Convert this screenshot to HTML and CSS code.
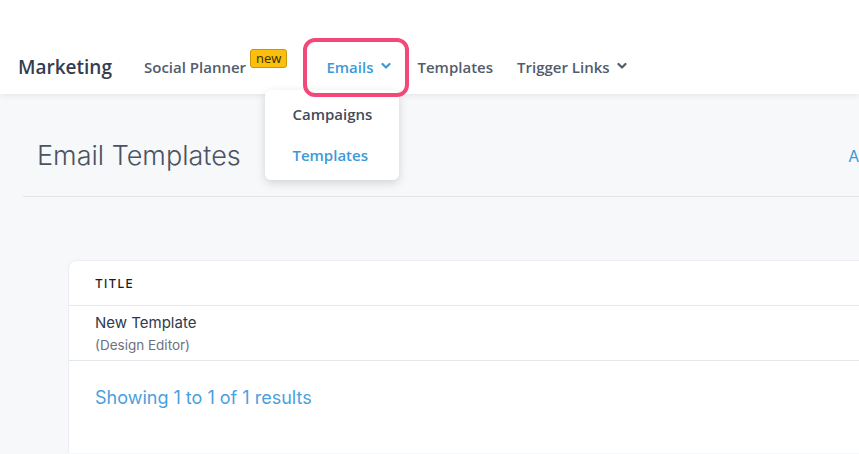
FILE: index.html
```html
<!DOCTYPE html>
<html>
<head>
<meta charset="utf-8">
<link rel="stylesheet" href="styles.css">
</head>
<body>
<header class="topbar">
  <div class="brand">Marketing</div>
  <nav class="nav">
    <div class="nav-item social">Social Planner <span class="badge">new</span></div>
    <div class="nav-item emails active">
      <span>Emails</span>
      <svg class="chev" viewBox="0 0 10 10" width="10" height="10"><path d="M1.5 3 L5 6.5 L8.5 3" fill="none" stroke="currentColor" stroke-width="2.2" stroke-linecap="round" stroke-linejoin="round"/></svg>
      <div class="highlight"></div>
      <div class="dropdown">
        <div class="dd-item">Campaigns</div>
        <div class="dd-item dd-active">Templates</div>
      </div>
    </div>
    <div class="nav-item templates">Templates</div>
    <div class="nav-item">
      <span>Trigger Links</span>
      <svg class="chev" viewBox="0 0 10 10" width="10" height="10"><path d="M1.5 3 L5 6.5 L8.5 3" fill="none" stroke="currentColor" stroke-width="2.2" stroke-linecap="round" stroke-linejoin="round"/></svg>
    </div>
  </nav>
</header>
<main class="main">
  <div class="title-row">
    <h1 class="page-title">Email Templates</h1>
    <span class="add-link">Add</span>
  </div>
  <section class="card">
    <div class="card-head">TITLE</div>
    <div class="card-row">
      <div class="row-name">New Template</div>
      <div class="row-sub">(Design Editor)</div>
    </div>
    <div class="card-foot">Showing 1 to 1 of 1 results</div>
  </section>
</main>
</body>
</html>
```
FILE: styles.css
```css
* { box-sizing: border-box; }
html, body { margin: 0; padding: 0; }
body {
  width: 859px;
  height: 454px;
  overflow: hidden;
  background: #f7f8fa;
  font-family: "Open Sans", "Liberation Sans", sans-serif;
}
.topbar {
  position: relative;
  z-index: 2;
  height: 94px;
  padding: 40px 0 0 18px;
  background: #fff;
  display: flex;
  align-items: center;
  box-shadow: 0 2px 6px rgba(0, 0, 0, 0.07);
}
.brand {
  font-size: 19px;
  font-weight: 600;
  color: #343d4d;
  margin-right: 32px;
}
.nav {
  display: flex;
  align-items: center;
}
.nav-item {
  position: relative;
  display: flex;
  align-items: center;
  font-size: 15px;
  font-weight: 600;
  color: #525c6c;
  margin-right: 24px;
}
.nav-item .chev { margin-left: 7px; margin-top: -3px; }
.social { margin-right: 39px; }
.templates { margin-right: 24px; }
.badge {
  position: relative;
  top: -9px;
  margin-left: 4px;
  background: #fbbf0c;
  border: 1px solid #c9960a;
  border-radius: 3px;
  color: #3a2e05;
  font-size: 13px;
  font-weight: 400;
  line-height: 17px;
  padding: 0 5px;
}
.emails { color: #3c9ad8; margin-right: 27px; }
.highlight {
  position: absolute;
  left: -23px;
  top: -19px;
  width: 106px;
  height: 59px;
  border: 4px solid #f2487a;
  border-radius: 12px;
}
.dropdown {
  position: absolute;
  left: -61px;
  top: 33px;
  width: 134px;
  height: 90px;
  background: #fff;
  border-radius: 6px;
  box-shadow: 0 3px 10px rgba(0, 0, 0, 0.15);
  padding-top: 12px;
  z-index: -1;
}
.dd-item {
  padding-left: 27px;
  height: 41px;
  line-height: 24px;
  font-size: 15px;
  font-weight: 600;
  color: #434c5b;
}
.dd-active { color: #3c9ad8; }
.main {
  padding: 0 0 0 23px;
}
.title-row {
  height: 103px;
  display: flex;
  align-items: center;
  justify-content: space-between;
  padding: 21px 0 0 14px;
  border-bottom: 1px solid #e2e4e8;
}
.page-title {
  margin: 0;
  font-family: Inter, "Liberation Sans", sans-serif;
  font-weight: 300;
  font-size: 27px;
  color: #4a5363;
}
.add-link {
  font-family: Inter, "Liberation Sans", sans-serif;
  font-size: 16px;
  color: #3c9ad8;
  margin-right: -20px;
}
.card {
  margin: 63px 0 0 45px;
  width: 820px;
  height: 193px;
  background: #fff;
  border: 1px solid #eceef1;
  border-bottom: none;
  border-radius: 8px 8px 0 0;
  font-family: Inter, "Liberation Sans", sans-serif;
}
.card-head {
  height: 45px;
  padding-left: 26px;
  display: flex;
  align-items: center;
  font-size: 12px;
  font-weight: 500;
  letter-spacing: 1.2px;
  color: #1a1d23;
  border-bottom: 1px solid #e5e7eb;
}
.card-row {
  height: 55px;
  padding: 5px 0 0 26px;
  border-bottom: 1px solid #e5e7eb;
}
.row-name {
  font-size: 15px;
  color: #303a4c;
  line-height: 22px;
  margin-top: 1px;
}
.row-sub {
  font-size: 13.5px;
  color: #6b7280;
  line-height: 22px;
}
.card-foot {
  padding: 26px 0 0 26px;
  font-size: 18px;
  color: #4a9fe0;
}
```
